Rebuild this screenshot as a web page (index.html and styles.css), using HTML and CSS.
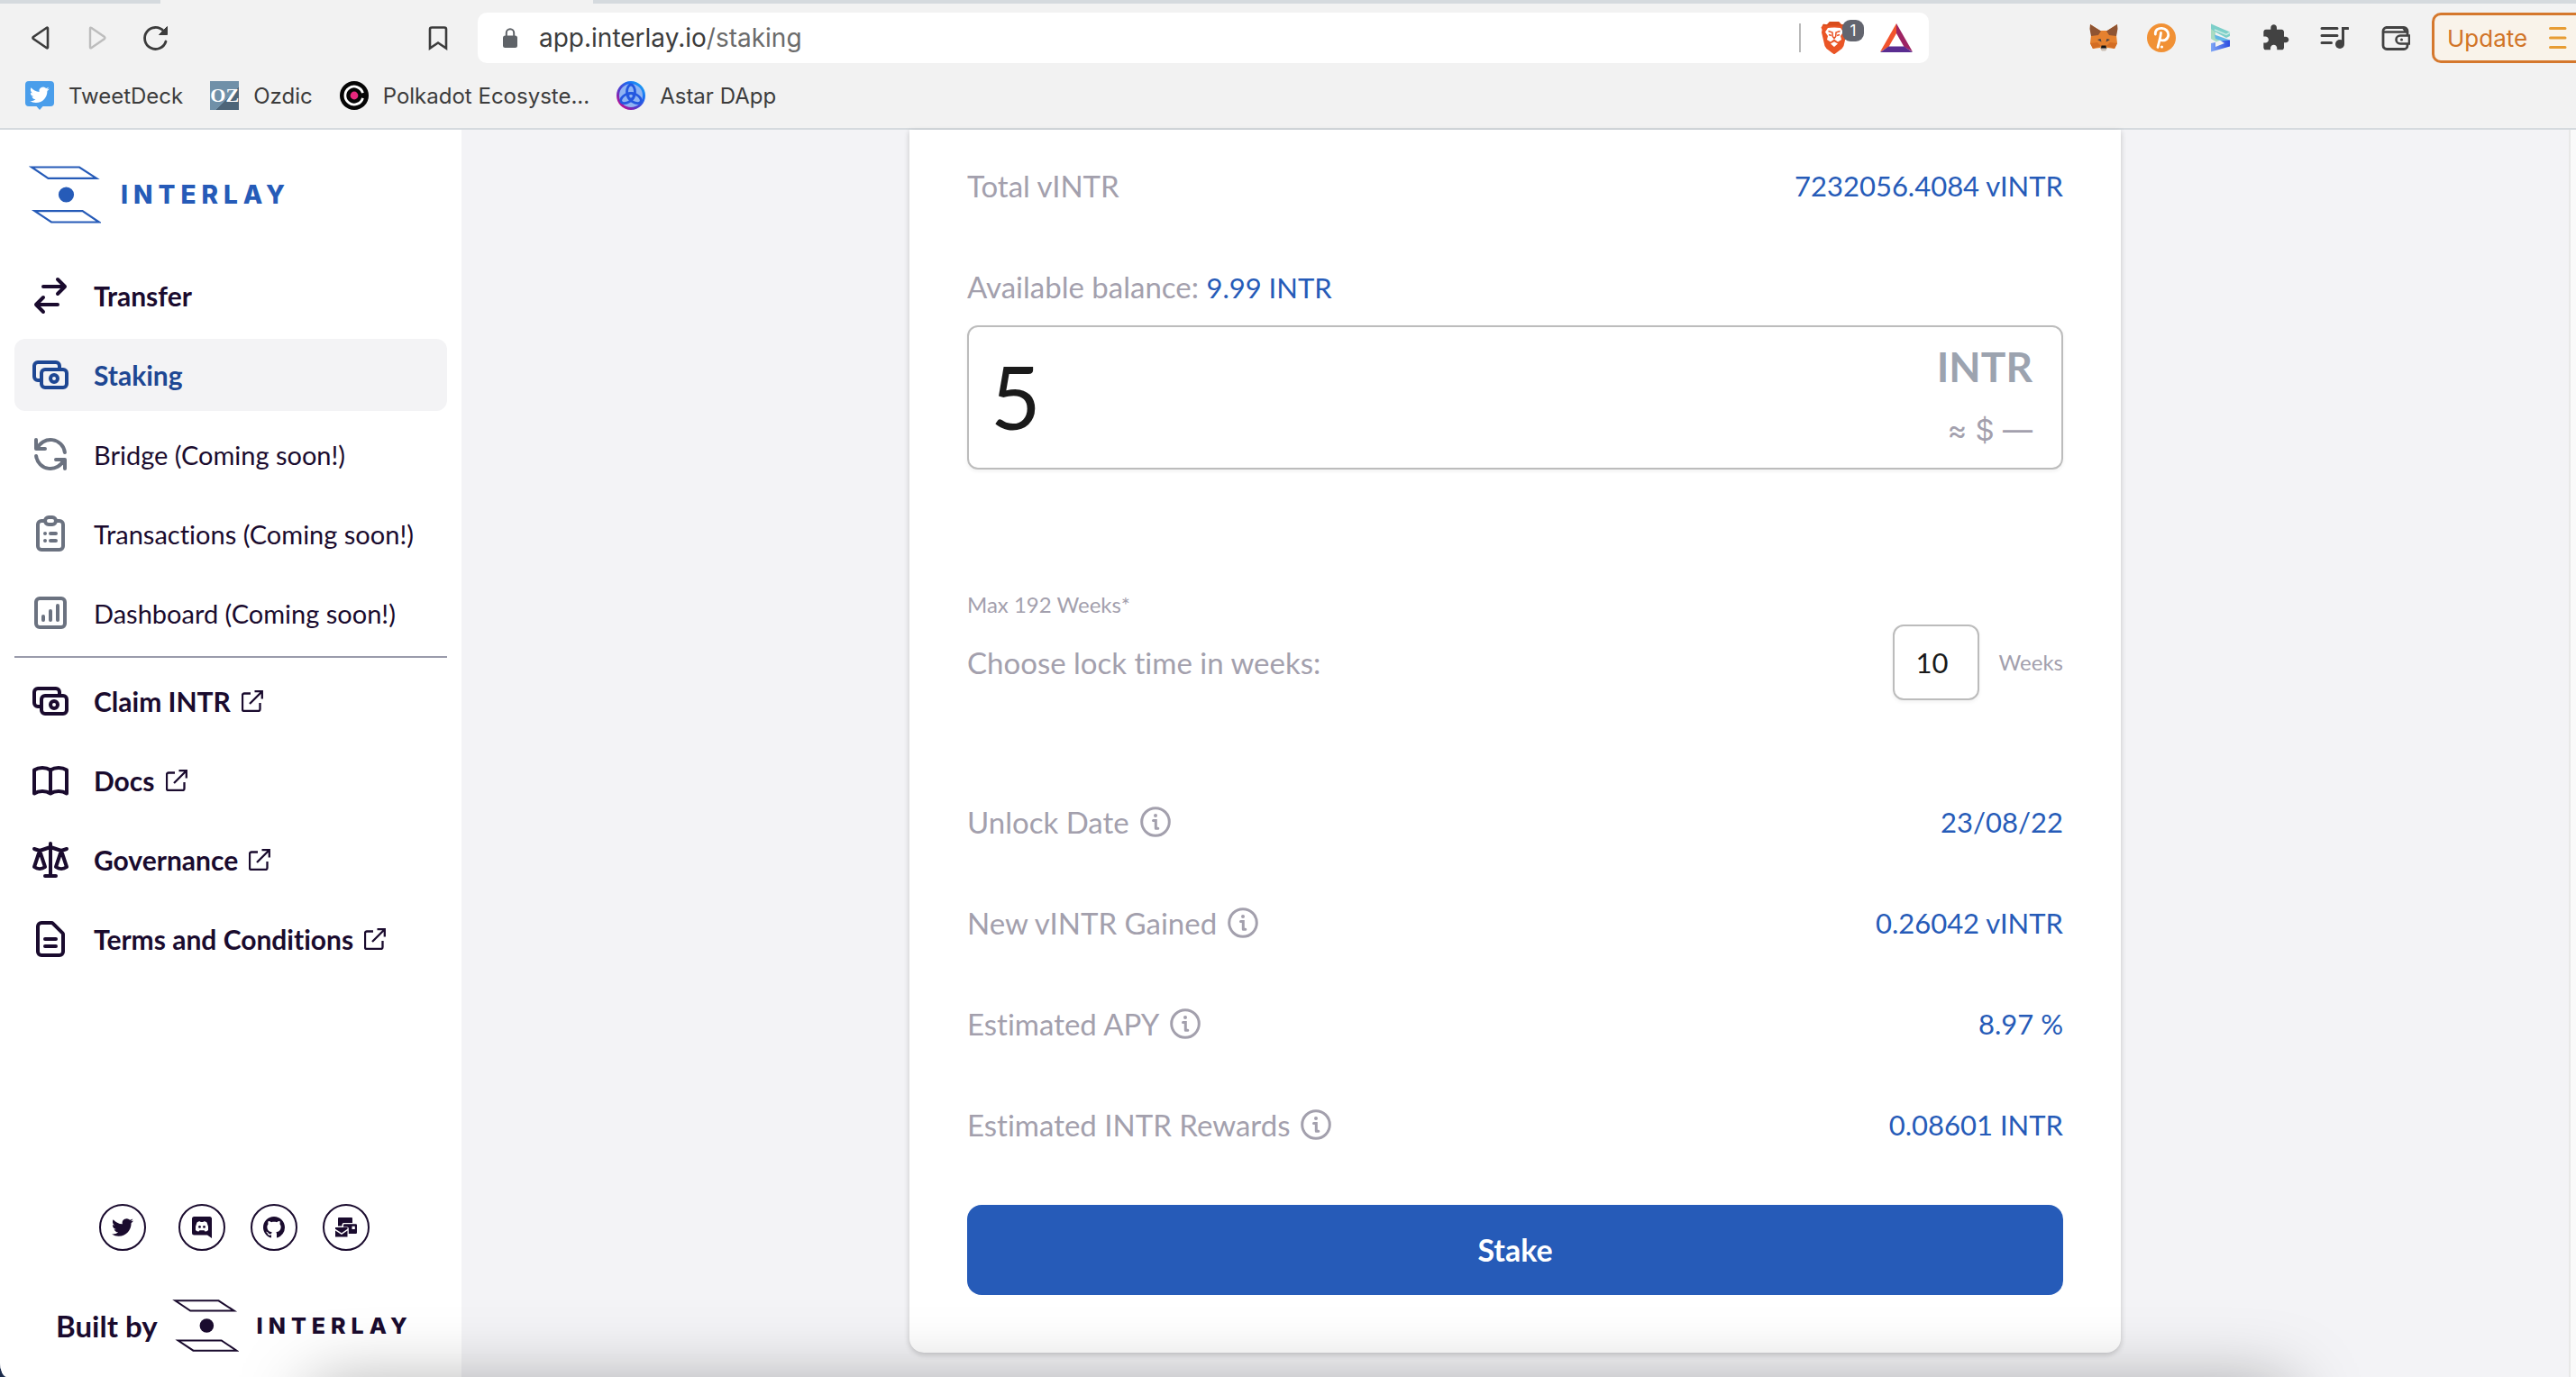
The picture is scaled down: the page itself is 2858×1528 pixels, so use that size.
FILE: index.html
```html
<!DOCTYPE html>
<html lang="en">
<head>
<meta charset="utf-8">
<meta name="viewport" content="width=device-width, initial-scale=1">
<title>Interlay – Staking</title>
<link rel="stylesheet" href="styles.css">
</head>
<body>
<svg class="defs" aria-hidden="true">
  <symbol id="external" viewBox="0 0 24 24"><path d="M10 3.500H3a2 2 0 0 0-2 2V21a2 2 0 0 0 2 2h15.500a2 2 0 0 0 2-2v-7M14.500 1.200H22.800V9.500M22.500 1.500 9 15" fill="none" stroke="currentColor" stroke-width="2.300"/></symbol>
  <symbol id="cash" viewBox="0 0 24 24"><path d="M17 9V7a2 2 0 00-2-2H5a2 2 0 00-2 2v6a2 2 0 002 2h2m2 4h10a2 2 0 002-2v-6a2 2 0 00-2-2H9a2 2 0 00-2 2v6a2 2 0 002 2zm7-5a2 2 0 11-4 0 2 2 0 014 0z"/></symbol>
  <symbol id="info" viewBox="0 0 34 34"><circle cx="17" cy="17" r="15.300" fill="none" stroke="currentColor" stroke-width="3"/><circle cx="17" cy="10" r="2" fill="currentColor"/><path d="M14.500 15.500H17.300V24M17.300 24.300h2.500" fill="none" stroke="currentColor" stroke-width="3" stroke-linecap="round"/></symbol>
  <symbol id="interlay" viewBox="0 0 80 64"><g fill="none" stroke="currentColor" stroke-width="2.200"><path d="M3 1.500H56L75 13.800H21.500Z"/><path d="M6.500 50.200H59.500L78 62.500H25Z"/></g><circle cx="41.500" cy="32" r="8.600" fill="currentColor"/></symbol>
</svg>
<div class="window">
  <header class="browser">
    <div class="tabstrip"><span class="tab"></span></div>
    <div class="toolbar">
      <div class="nav-buttons">
        <button aria-label="Back"><svg viewBox="0 0 32 32"><path d="M25 5.500Q25 4 23.500 5L9 15Q8 16 9 17L23.500 27Q25 28 25 26.500Z" fill="none" stroke="#3c3c3c" stroke-width="2.600"/></svg></button>
        <button aria-label="Forward"><svg viewBox="0 0 32 32"><path d="M8 5.500Q8 4 9.500 5L24 15Q25 16 24 17L9.500 27Q8 28 8 26.500Z" fill="none" stroke="#bdbdbd" stroke-width="2.400"/></svg></button>
        <button aria-label="Reload"><svg viewBox="0 0 32 32"><path d="M25.500 8.500A12 12 0 1 0 28 20" fill="none" stroke="#3c3c3c" stroke-width="2.800" stroke-linecap="round"/><path d="M29.500 3.500V12.500H20.500Z" fill="#3c3c3c" stroke="#3c3c3c" stroke-width="1" stroke-linejoin="round"/></svg></button>
        <button class="bookmark" aria-label="Bookmark this page"><svg viewBox="0 0 32 32"><path d="M10.500 4.500H25a2 2 0 0 1 2 2V27.500L18 21.500 9 27.500V6.500a2 2 0 0 1 2-2Z" fill="none" stroke="#3c3c3c" stroke-width="2.600"/></svg></button>
      </div>
      <div class="address">
        <svg class="lock" viewBox="0 0 16 22"><rect y="8.500" width="16" height="13.500" rx="2.500" fill="#5f6368"/><path d="M3.800 9V5.500a4.200 4.200 0 0 1 8.400 0V9" fill="none" stroke="#5f6368" stroke-width="2"/></svg>
        <div class="url" role="textbox" contenteditable="true" spellcheck="false" aria-label="Address"><span>app.interlay.io</span><span class="path">/staking</span></div>
        <span class="sep"></span>
        <button class="brave" aria-label="Brave Shields"><svg viewBox="0 0 30 36"><path d="M10 0H20L23 3.200 27 2.800 29.500 6.500 28.500 9 29 12 25.500 27 23.500 30 15.500 36 14.500 36 6.500 30 4.500 27 1 12 1.500 9 .5 6.500 3 2.800 7 3.200Z" fill="#ea5526"/><path d="M10 0H20L23 3.200 27 2.800 28.200 4.600H1.800L3 2.800 7 3.200Z" fill="#d84c1c"/><path d="M15 6.500 22 7 25 11.500 22 16 23 20 19 22.500 15 19.500 11 22.500 7 20 8 16 5 11.500 8 7ZM15 22.300 19 24.500 15 28 11 24.500Z" fill="#fff"/><path d="M8.500 10.500 13 12 13.300 16.500 15 18.500 16.700 16.500 17 12 21.500 10.500M9 14.500 12 15.500M21 14.500 18 15.500" fill="none" stroke="#ea5526" stroke-width="1.500"/></svg><span class="count">1</span></button>
        <button class="bat" aria-label="Brave Rewards"><svg viewBox="0 0 36 32"><path d="M18 0 0 31.500 9.500 26 18 11Z" fill="#f2542d"/><path d="M18 0 36 31.500 26.500 26 18 11Z" fill="#9e2463"/><path d="M0 32H36L26.500 25.500H9.500Z" fill="#5a2d91"/></svg></button>
      </div>
      <div class="extensions">
        <button aria-label="MetaMask"><svg viewBox="0 0 32 32"><path d="M1 1 12 8H20L31 1 30 13 31 22 28 28 20 27 18 30H14L12 27 4 28 1 22 2 13Z" fill="#e5812f"/><path d="M1 1 13 8.500 10 13 2 14 .5 6ZM31 1 19 8.500 22 13 30 14 31.500 6Z" fill="#8f5432"/><path d="M12 26.500 14 30.500H18L20 26.500Z" fill="#c9bfb6"/><path d="M13.500 24.500H18.500L19 27.500H13Z" fill="#141414"/><path d="M9 18 13.500 20.500 12.500 17ZM23 18 18.500 20.500 19.500 17Z" fill="#3f4149"/><path d="M1 22 9 21 13 25 4 28ZM31 22 23 21 19 25 28 28Z" fill="#d36d24"/></svg></button>
        <button aria-label="Polkadot wallet"><svg viewBox="0 0 32 32"><circle cx="16" cy="16" r="16" fill="#f19135"/><path d="M9.300 12C8.500 2 24.500 4 23.800 13 23 19 18 19.500 15.500 18.500M15.500 10.500C15 16 13.500 20 12 26.500" fill="none" stroke="#fff" stroke-width="2.800" stroke-linecap="round"/><circle cx="16.500" cy="26" r="1.600" fill="#fff"/></svg></button>
        <button aria-label="SubWallet"><svg viewBox="0 0 32 32"><defs><linearGradient id="sub" x1="0" y1="0" x2="1" y2="0"><stop offset="0" stop-color="#7fa6f5"/><stop offset="1" stop-color="#2a4be0"/></linearGradient></defs><path d="M7 .5 12 3V13.500L17 18.500 13 20.500 7 17Z" fill="#a9dcc2"/><path d="M7 .5 28 9.500V14L24 16 11 9 7 6Z" fill="#7ccfc9"/><path d="M11 7 24 12.500 28 10" fill="none" stroke="#c9ebe2" stroke-width="1.500"/><path d="M11 12.500 28 18.500 23 21 12 17Z" fill="#62b6e6"/><path d="M7 22 12 21V26L22 22 18 19.500 28 18.500V25.500L7 31.500Z" fill="url(#sub)"/></svg></button>
        <button aria-label="Extensions"><svg viewBox="1 0 24 24"><path d="M20.500 11H19V7c0-1.100-.9-2-2-2h-4V3.500C13 2.120 11.880 1 10.500 1S8 2.120 8 3.500V5H4c-1.100 0-1.990.9-1.990 2v3.800H3.500c1.490 0 2.700 1.210 2.700 2.700s-1.210 2.700-2.700 2.700H2V20c0 1.100.9 2 2 2h3.800v-1.500c0-1.490 1.210-2.700 2.700-2.700 1.490 0 2.700 1.210 2.700 2.700V22H17c1.100 0 2-.9 2-2v-4h1.500c1.380 0 2.500-1.120 2.500-2.500S21.880 11 20.500 11z" fill="#424242"/></svg></button>
        <button aria-label="Media"><svg viewBox="0 0 32 32"><path d="M2 5.500H19M2 13.500H19M2 21.500H12.500" stroke="#424242" stroke-width="3" stroke-linecap="round"/><path d="M31 5.500H25.500V22" fill="none" stroke="#424242" stroke-width="3" stroke-linecap="round"/><circle cx="22" cy="23" r="5" fill="#424242"/></svg></button>
        <button class="wallet" aria-label="Wallet"><svg viewBox="0 0 36 32"><rect x="6" y="4.500" width="27" height="24" rx="4" fill="none" stroke="#424242" stroke-width="2.800"/><path d="M6 9.500H32M9 4.500H28L32 10" fill="none" stroke="#424242" stroke-width="2.600"/><path d="M35 13.500H25a4.500 4.500 0 0 0 0 9H35Z" fill="#f2f2f2" stroke="#424242" stroke-width="2.600"/><circle cx="26.500" cy="18" r="1.500" fill="#424242"/></svg></button>
        <button class="update">Update<svg viewBox="0 0 20 26"><path d="M1.500 2.500H18M1.500 13H18M1.500 23.500H18" stroke="#e79c33" stroke-width="3" stroke-linecap="round"/></svg></button>
      </div>
    </div>
    <nav class="bookmarks" aria-label="Bookmarks">
      <a href="#"><svg viewBox="0 0 32 32"><path d="M4 0H28a4 4 0 0 1 4 4V24a4 4 0 0 1-4 4H19.500L16 32 12.500 28H4a4 4 0 0 1-4-4V4A4 4 0 0 1 4 0Z" fill="#4a9eeb"/><path transform="translate(5 4.500) scale(.9)" fill="#fff" d="M23.953 4.570a10 10 0 01-2.825.775 4.958 4.958 0 002.163-2.723c-.951.555-2.005.959-3.127 1.184a4.920 4.920 0 00-8.384 4.482C7.690 8.095 4.067 6.130 1.640 3.162a4.822 4.822 0 00-.666 2.475c0 1.710.87 3.213 2.188 4.096a4.904 4.904 0 01-2.228-.616v.06a4.923 4.923 0 003.946 4.827 4.996 4.996 0 01-2.212.085 4.936 4.936 0 004.604 3.417 9.867 9.867 0 01-6.102 2.105c-.39 0-.779-.023-1.170-.067a13.995 13.995 0 007.557 2.209c9.053 0 13.998-7.496 13.998-13.985 0-.21 0-.42-.015-.63A9.935 9.935 0 0024 4.590z"/></svg>TweetDeck</a>
      <a href="#"><span class="oz">OZ</span>Ozdic</a>
      <a href="#"><svg viewBox="0 0 32 32"><circle cx="16" cy="16" r="16" fill="#050505"/><path d="M25.500 13.200A10 10 0 1 0 25.500 18.800" fill="none" stroke="#fff" stroke-width="2.800"/><circle cx="16" cy="16" r="4.400" fill="#e6287d"/></svg>Polkadot Ecosyste...</a>
      <a href="#"><svg viewBox="0 0 32 32"><defs><linearGradient id="astar" x1="0" y1="1" x2="1" y2="0"><stop offset="0" stop-color="#e6007a"/><stop offset=".35" stop-color="#5a36c8"/><stop offset=".7" stop-color="#1b6df2"/><stop offset="1" stop-color="#1fb4f5"/></linearGradient></defs><circle cx="16" cy="16" r="14.500" fill="#8fb4f3" stroke="url(#astar)" stroke-width="3"/><g fill="none" stroke="#2458e0" stroke-width="2.800"><ellipse cx="16" cy="12" rx="4.500" ry="8"/><ellipse cx="12" cy="19" rx="4.500" ry="8" transform="rotate(60 12 19)"/><ellipse cx="20" cy="19" rx="4.500" ry="8" transform="rotate(-60 20 19)"/></g></svg>Astar DApp</a>
    </nav>
  </header>

  <div class="page">
    <aside class="sidebar">
      <a class="brand" href="#"><svg><use href="#interlay"/></svg><span>INTERLAY</span></a>
      <nav class="menu" aria-label="Main">
        <a href="#"><svg viewBox="0 0 24 24"><path d="M8 7h12m0 0l-4-4m4 4l-4 4m0 6H4m0 0l4 4m-4-4l4-4"/></svg>Transfer</a>
        <a href="#" class="active" aria-current="page"><svg><use href="#cash"/></svg>Staking</a>
        <a href="#" class="soon"><svg viewBox="0 0 24 24"><path d="M4 4v5h.582m15.356 2A8.001 8.001 0 004.582 9m0 0H9m11 11v-5h-.581m0 0a8.003 8.003 0 01-15.357-2m15.357 2H15"/></svg>Bridge (Coming soon!)</a>
        <a href="#" class="soon"><svg viewBox="0 0 24 24"><path d="M9 5H7a2 2 0 00-2 2v12a2 2 0 002 2h10a2 2 0 002-2V7a2 2 0 00-2-2h-2M9 5a2 2 0 002 2h2a2 2 0 002-2M9 5a2 2 0 012-2h2a2 2 0 012 2m-3 7h3m-3 4h3m-6-4h.01M9 16h.01"/></svg>Transactions (Coming soon!)</a>
        <a href="#" class="soon"><svg viewBox="0 0 24 24"><path d="M16 8v8m-4-5v5m-4-2v2m-2 4h12a2 2 0 002-2V6a2 2 0 00-2-2H6a2 2 0 00-2 2v12a2 2 0 002 2z"/></svg>Dashboard (Coming soon!)</a>
        <hr>
        <a href="#"><svg><use href="#cash"/></svg>Claim INTR<svg class="ext"><use href="#external"/></svg></a>
        <a href="#"><svg viewBox="0 0 24 24"><path d="M12 6.253v13m0-13C10.832 5.477 9.246 5 7.500 5S4.168 5.477 3 6.253v13C4.168 18.477 5.754 18 7.500 18s3.332.477 4.500 1.253m0-13C13.168 5.477 14.754 5 16.500 5c1.747 0 3.332.477 4.500 1.253v13C19.832 18.477 18.247 18 16.500 18c-1.746 0-3.332.477-4.500 1.253"/></svg>Docs<svg class="ext"><use href="#external"/></svg></a>
        <a href="#"><svg viewBox="0 0 24 24"><path d="M3 6l3 1m0 0l-3 9a5.002 5.002 0 006.001 0M6 7l3 9M6 7l6-2m6 2l3-1m-3 1l-3 9a5.002 5.002 0 006.001 0M18 7l3 9m-3-9l-6-2m0-2v2m0 16V5m0 16H9m3 0h3"/></svg>Governance<svg class="ext"><use href="#external"/></svg></a>
        <a href="#"><svg viewBox="0 0 24 24"><path d="M9 12h6m-6 4h6m2 5H7a2 2 0 01-2-2V5a2 2 0 012-2h5.586a1 1 0 01.707.293l5.414 5.414a1 1 0 01.293.707V19a2 2 0 01-2 2z"/></svg>Terms and Conditions<svg class="ext"><use href="#external"/></svg></a>
      </nav>
      <div class="social">
        <a href="#" aria-label="Twitter"><svg viewBox="0 0 24 24"><path d="M23.953 4.570a10 10 0 01-2.825.775 4.958 4.958 0 002.163-2.723c-.951.555-2.005.959-3.127 1.184a4.920 4.920 0 00-8.384 4.482C7.690 8.095 4.067 6.130 1.640 3.162a4.822 4.822 0 00-.666 2.475c0 1.710.87 3.213 2.188 4.096a4.904 4.904 0 01-2.228-.616v.06a4.923 4.923 0 003.946 4.827 4.996 4.996 0 01-2.212.085 4.936 4.936 0 004.604 3.417 9.867 9.867 0 01-6.102 2.105c-.39 0-.779-.023-1.170-.067a13.995 13.995 0 007.557 2.209c9.053 0 13.998-7.496 13.998-13.985 0-.21 0-.42-.015-.63A9.935 9.935 0 0024 4.590z"/></svg></a>
        <a href="#" aria-label="Discord"><svg viewBox="0 0 24 24"><path d="M3.500 0H20.500A2.500 2.500 0 0 1 23 2.500V24L18 20.500H3.500A2.500 2.500 0 0 1 1 18V2.500A2.500 2.500 0 0 1 3.500 0Z"/><path d="M6.500 6.500Q8 5.300 10 5.200L10.500 6H13.500L14 5.200Q16 5.300 17.500 6.500 19.500 10.500 19 15 17.500 16.500 15.500 16.500L14.500 15.200H9.500L8.500 16.500Q6.500 16.500 5 15 4.500 10.500 6.500 6.500Z" fill="#fff"/><circle cx="9.500" cy="11.400" r="1.400"/><circle cx="14.500" cy="11.400" r="1.400"/></svg></a>
        <a href="#" aria-label="GitHub"><svg viewBox="0 0 16 16"><path d="M8 0C3.580 0 0 3.580 0 8c0 3.540 2.290 6.530 5.470 7.590.4.070.55-.17.55-.38 0-.19-.01-.82-.01-1.490-2.010.37-2.530-.49-2.690-.94-.09-.23-.48-.94-.82-1.130-.28-.15-.68-.52-.01-.53.63-.01 1.080.58 1.230.82.72 1.210 1.870.87 2.330.66.070-.52.28-.87.51-1.070-1.780-.2-3.640-.89-3.640-3.950 0-.87.31-1.590.82-2.150-.08-.2-.36-1.020.08-2.120 0 0 .67-.21 2.200.82.64-.18 1.320-.27 2-.27s1.360.09 2 .27c1.530-1.040 2.200-.82 2.200-.82.44 1.100.16 1.920.08 2.120.51.56.82 1.270.82 2.150 0 3.070-1.870 3.750-3.650 3.950.29.25.54.73.54 1.480 0 1.070-.01 1.930-.01 2.200 0 .21.15.46.55.38A8.010 8.010 0 0016 8c0-4.420-3.580-8-8-8z"/></svg></a>
        <a href="#" aria-label="Mailing list"><svg viewBox="0 0 24 24"><path d="M3 2a1 1 0 0 1 1-1H18a1 1 0 0 1 1 1V7H9.500A2 2 0 0 0 7.500 9V10.500H3Z"/><path d="M9 9.500A1.200 1.200 0 0 1 10.200 8.300H22.800A1.200 1.200 0 0 1 24 9.500V17.800A1.200 1.200 0 0 1 22.800 19H14.800V13A1.500 1.500 0 0 0 13.300 11.500H9ZM18.500 10.800V14H21.800V10.800Z" fill-rule="evenodd"/><path d="M0 12H13.500V13.800L7 18.300 0 13.800ZM0 15.500 7 20 13.500 15.500V22.500H0Z"/></svg></a>
      </div>
      <a class="built" href="#">Built by<svg><use href="#interlay"/></svg><span>INTERLAY</span></a>
    </aside>

    <main>
      <form class="card">
        <div class="row"><span>Total vINTR</span><output>7232056.4084 vINTR</output></div>
        <label class="balance" for="amount">Available balance: <b>9.99 INTR</b></label>
        <div class="amount">
          <input id="amount" type="text" inputmode="decimal" value="5">
          <div class="unit"><strong>INTR</strong><span>≈ $ —</span></div>
        </div>
        <p class="hint">Max 192 Weeks*</p>
        <div class="row lock-time">
          <label for="weeks">Choose lock time in weeks:</label>
          <span class="weeks"><input id="weeks" type="text" inputmode="numeric" value="10">Weeks</span>
        </div>
        <div class="rows">
          <div class="row"><span>Unlock Date<svg><use href="#info"/></svg></span><output>23/08/22</output></div>
          <div class="row"><span>New vINTR Gained<svg><use href="#info"/></svg></span><output>0.26042 vINTR</output></div>
          <div class="row"><span>Estimated APY<svg><use href="#info"/></svg></span><output>8.97 %</output></div>
          <div class="row"><span>Estimated INTR Rewards<svg><use href="#info"/></svg></span><output>0.08601 INTR</output></div>
        </div>
        <button type="button" class="stake">Stake</button>
      </form>
    </main>
    <div class="scroll-rail"></div>
  </div>
</div>
<div class="dock-shadow"></div>
</body>
</html>
```

FILE: styles.css
```css
* { box-sizing: border-box; }

body {
  margin: 0;
  background: #1c2c4c;
  font-family: Lato, "Open Sans", sans-serif;
  font-variant-ligatures: none;
  color: #1a0b2e;
  overflow: hidden;
}

a { color: inherit; text-decoration: none; }
button { border: 0; padding: 0; background: none; font: inherit; display: flex; cursor: pointer; }
svg { display: block; flex: none; }
.defs { position: absolute; width: 0; height: 0; }

.window {
  min-height: 100vh;
  display: flex;
  flex-direction: column;
  background: #f3f3f6;
  border-bottom-left-radius: 8px 16px;
  overflow: hidden;
}

/* Browser chrome */
.browser {
  background: #f2f2f2;
  border-bottom: 2px solid #d5dade;
  font-family: Inter, "Liberation Sans", sans-serif;
  color: #3c3c3c;
}
.tabstrip { height: 4px; background: #d5dade; padding-left: 178px; }
.tab { display: block; width: 480px; height: 4px; background: #f2f2f2; }
.toolbar { display: flex; align-items: center; height: 76px; }
.nav-buttons { display: flex; gap: 32px; padding-left: 28px; }
.nav-buttons svg, .extensions svg { width: 32px; height: 32px; }
.bookmark { margin-left: 248px; }
.address {
  flex: 1;
  display: flex;
  align-items: center;
  height: 56px;
  margin-left: 30px;
  padding: 0 18px 0 28px;
  border-radius: 10px;
  background: #fff;
}
.lock { width: 16px; height: 22px; }
.url { flex: 1; margin-left: 24px; font-size: 28px; line-height: 40px; outline: 0; }
.path { color: #6b6b6b; }
.sep { width: 2px; height: 32px; background: #b9b9b9; }
.brave { position: relative; margin: 0 36px 0 22px; }
.brave svg { width: 30px; height: 36px; }
.count {
  position: absolute;
  left: 24px;
  top: -2px;
  width: 24px;
  height: 24px;
  border-radius: 9px;
  background: #63656f;
  color: #fff;
  font-size: 17px;
  line-height: 24px;
  text-align: center;
}
.bat svg { width: 36px; height: 32px; }
.extensions { display: flex; align-items: center; gap: 32px; padding-left: 178px; }
.extensions .wallet svg { width: 36px; }
.update {
  width: 160px;
  height: 56px;
  margin-left: -8px;
  padding-left: 14px;
  align-items: center;
  gap: 24px;
  border: solid #d5782d;
  border-width: 3px 0 3px 3px;
  border-radius: 10px 0 0 10px;
  background: #f9f3ea;
  color: #d17427;
  font-size: 26px;
}
.update svg { width: 20px; height: 26px; }
.bookmarks { display: flex; align-items: center; gap: 30px; height: 62px; padding: 0 28px 10px; font-size: 24px; }
.bookmarks a { display: flex; align-items: center; gap: 16px; }
.bookmarks svg { width: 32px; height: 32px; }
.oz {
  width: 32px;
  height: 32px;
  background: linear-gradient(135deg, #7090a8 60%, #4e6578 60%);
  color: #fff;
  font: bold 22px/32px "Liberation Serif", serif;
  text-align: center;
}

/* Sidebar */
.page { flex: 1; display: flex; }
.sidebar { flex: none; width: 512px; padding: 40px 16px 28px; background: #fff; display: flex; flex-direction: column; }
.brand { display: flex; align-items: center; gap: 22px; padding-left: 16px; color: #265bb8; }
.brand svg { width: 80px; height: 64px; }
.brand span, .built span { font-family: Inter, sans-serif; font-weight: 800; letter-spacing: 6px; }
.brand span { font-size: 28px; }
.menu { display: flex; flex-direction: column; gap: 8px; margin-top: 40px; }
.menu a {
  display: flex;
  align-items: center;
  height: 80px;
  padding: 0 16px;
  border-radius: 12px;
  font-size: 30px;
  font-weight: 700;
}
.menu svg { width: 48px; height: 48px; margin-right: 24px; fill: none; stroke: currentColor; stroke-width: 2; stroke-linecap: round; stroke-linejoin: round; }
.menu .ext { width: 24px; height: 24px; margin: 0 0 0 12px; stroke-linecap: butt; stroke-linejoin: miter; }
.menu .active { background: #f3f3f5; color: #1e4793; }
.menu .soon { font-size: 29px; font-weight: 400; }
.menu .soon svg { color: #6b7280; }
.menu hr { width: 100%; height: 2px; margin: 0; border: 0; background: #9a9bab; }
.social { display: flex; gap: 28px; margin-top: auto; padding-left: 94px; }
.social a { display: grid; place-items: center; width: 52px; height: 52px; border: 2px solid #1a0b2e; border-radius: 50%; }
.social a:first-child { margin-right: 8px; }
.social svg { width: 24px; height: 24px; fill: #1a0b2e; }
.built { display: flex; align-items: center; margin-top: 54px; padding-left: 46px; font-size: 33px; font-weight: 700; }
.built svg { width: 74px; height: 58px; margin: 0 20px 0 16px; }
.built span { font-size: 25px; }

/* Staking card */
main { flex: 1; display: flex; justify-content: center; align-items: flex-start; }
.card {
  width: 100%;
  max-width: 1344px;
  padding: 38px 64px 64px;
  border-radius: 0 0 16px 16px;
  background: #fff;
  box-shadow: 0 2px 6px rgba(0, 0, 0, .2);
  color: #a3a0ad;
  font-size: 33px;
  line-height: 48px;
}
.row { display: flex; justify-content: space-between; align-items: center; }
.row > span { display: flex; align-items: center; }
.row > span svg { width: 34px; height: 34px; margin-left: 12px; }
output, .balance b { color: #265bb8; font-size: 31px; font-weight: 400; }
.balance { display: block; margin: 64px 0 18px; }
.amount {
  display: flex;
  justify-content: space-between;
  height: 160px;
  padding: 0 32px 0 24px;
  border: 2px solid #bcbcbc;
  border-radius: 12px;
  box-shadow: 0 2px 4px rgba(0, 0, 0, .06);
}
.amount input { flex: 1; min-width: 0; border: 0; padding: 0 0 4px; outline: 0; background: none; font: inherit; font-size: 96px; color: #1a1a1a; }
.unit { display: flex; flex-direction: column; align-items: flex-end; padding-top: 10px; gap: 2px; }
.unit strong { font-size: 46px; line-height: 68px; color: #9ca3af; }
.unit span { font-family: Inter, sans-serif; font-size: 33px; line-height: 68px; }
.hint { margin: 134px 0 6px; font-size: 24px; line-height: 32px; }
.weeks { gap: 22px; font-size: 24px; }
.weeks input {
  width: 96px;
  height: 84px;
  padding: 0 24px;
  border: 2px solid #bcbcbc;
  border-radius: 12px;
  box-shadow: 0 2px 4px rgba(0, 0, 0, .06);
  font: inherit;
  font-size: 31px;
  color: #1a1a1a;
}
.rows { display: grid; gap: 64px; margin: 111px 0 65px; }
.stake {
  width: 100%;
  height: 100px;
  justify-content: center;
  align-items: center;
  border-radius: 16px;
  background: #265bb8;
  color: #fff;
  font-size: 34px;
  font-weight: 700;
}
.scroll-rail { width: 8px; background: #fafafa; border-left: 2px solid #e8e8e8; }

/* Soft shadow cast by the dock along the lower edge */
.dock-shadow {
  position: fixed;
  left: 345px;
  right: 318px;
  bottom: -90px;
  height: 80px;
  box-shadow: 0 0 80px rgba(0, 0, 0, .35);
  pointer-events: none;
}
```
